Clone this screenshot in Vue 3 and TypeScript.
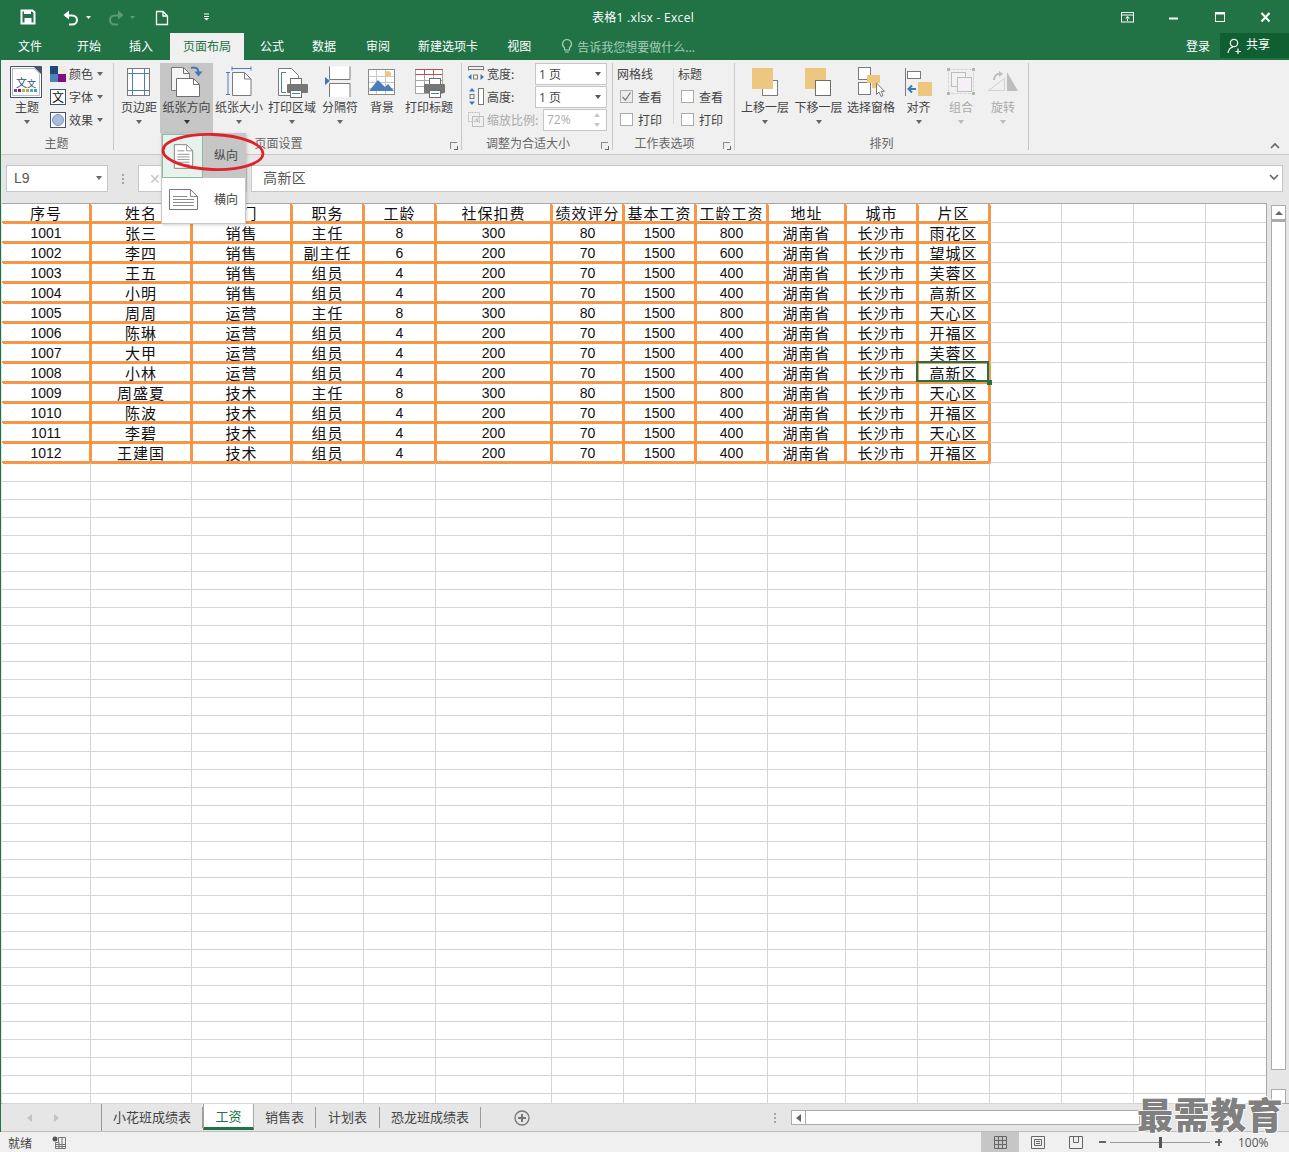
<script setup lang="ts">
const headers = '序号 姓名 部门 职务 工龄 社保扣费 绩效评分 基本工资 工龄工资 地址 城市 片区'.split(' ')

const records = [
  '1001 张三 销售 主任 8 300 80 1500 800 湖南省 长沙市 雨花区',
  '1002 李四 销售 副主任 6 200 70 1500 600 湖南省 长沙市 望城区',
  '1003 王五 销售 组员 4 200 70 1500 400 湖南省 长沙市 芙蓉区',
  '1004 小明 销售 组员 4 200 70 1500 400 湖南省 长沙市 高新区',
  '1005 周周 运营 主任 8 300 80 1500 800 湖南省 长沙市 天心区',
  '1006 陈琳 运营 组员 4 200 70 1500 400 湖南省 长沙市 开福区',
  '1007 大甲 运营 组员 4 200 70 1500 400 湖南省 长沙市 芙蓉区',
  '1008 小林 运营 组员 4 200 70 1500 400 湖南省 长沙市 高新区',
  '1009 周盛夏 技术 主任 8 300 80 1500 800 湖南省 长沙市 天心区',
  '1010 陈波 技术 组员 4 200 70 1500 400 湖南省 长沙市 开福区',
  '1011 李碧 技术 组员 4 200 70 1500 400 湖南省 长沙市 天心区',
  '1012 王建国 技术 组员 4 200 70 1500 400 湖南省 长沙市 开福区'
].map((r) => r.split(' '))

const COLS = 16

type Cell = { key: string; text: string; data: boolean; num: boolean; sel: boolean }

const cells: Cell[] = []
const table = [headers, ...records]
for (let r = 0; r < 49; r++) {
  for (let c = 0; c < COLS; c++) {
    const text = table[r]?.[c] ?? ''
    cells.push({
      key: `${r}-${c}`,
      text,
      data: text !== '',
      num: /^\d+$/.test(text),
      sel: r === 8 && c === 11
    })
  }
}

const sheets = ['小花班成绩表', '工资', '销售表', '计划表', '恐龙班成绩表']
</script>

<template>
  <div class="app">
    <!-- title bar -->
    <div class="titlebar">
      <div class="qat">
        <svg width="220" height="33" viewBox="0 0 220 33">
          <path d="M21.5 9.5h11l2 2v11h-13z" fill="none" stroke="#fff" stroke-width="2" />
          <rect x="24" y="9" width="7" height="4" fill="#fff" />
          <rect x="24.5" y="17" width="7" height="5" fill="#fff" />
          <path d="M65 14.5h7c3 0 5 2 5 4.500s-2 4.500-5 4.500h-3" fill="none" stroke="#fff" stroke-width="2" />
          <path d="M69 9.500v9l-5.500-4.500z" fill="#fff" />
          <path d="M86 15h5l-2.500 3z" fill="#fff" />
          <path d="M122 14.500h-7c-3 0-5 2-5 4.500s2 4.500 5 4.500h3" fill="none" stroke="#5c9a7a" stroke-width="2" />
          <path d="M118 9.500v9l5.500-4.500z" fill="#5c9a7a" />
          <path d="M130 15h5l-2.500 3z" fill="#5c9a7a" />
          <path d="M156.500 10.500h6.500l4.500 4.500v8.500h-11zM163 10.500v4.500h4.500" fill="none" stroke="#fff" stroke-width="1.300" />
          <path d="M204 13h5M204 15.500h5v0" stroke="#fff" />
          <path d="M204 17h5l-2.500 2.500z" fill="#fff" />
        </svg>
      </div>
      <div class="doc-title">表格1 .xlsx - Excel</div>
      <div class="win-btns">
        <svg width="180" height="33" viewBox="1109 0 180 33">
          <rect x="1121.500" y="11.500" width="12" height="9.500" fill="none" stroke="#fff" />
          <path d="M1121 14h13" stroke="#fff" />
          <path d="M1127.500 15l-2.500 2.500h5zM1127 17h1v3h-1z" fill="#fff" />
          <path d="M1169 17.500h9" stroke="#fff" stroke-width="2" />
          <rect x="1215.500" y="11.500" width="9" height="9" fill="none" stroke="#fff" />
          <path d="M1215 12.500h10" stroke="#fff" stroke-width="2" />
          <path d="M1261.500 12l8 8.500M1269.500 12l-8 8.500" stroke="#fff" stroke-width="2" />
        </svg>
      </div>
    </div>

    <!-- tabs -->
    <div class="tabs">
      <span class="tab first">文件</span>
      <span class="tab">开始</span>
      <span class="tab">插入</span>
      <span class="tab active">页面布局</span>
      <span class="tab">公式</span>
      <span class="tab">数据</span>
      <span class="tab wide">审阅</span>
      <span class="tab">新建选项卡</span>
      <span class="tab view-tab">视图</span>
      <span class="tell">
        <svg width="14" height="16" viewBox="0 0 14 16">
          <path d="M7 1.500a4.500 4.500 0 0 0-2.500 8.200V12h5V9.700A4.500 4.500 0 0 0 7 1.500zM5 14h4" fill="none" stroke="#a6cdb7" stroke-width="1.200" />
        </svg>
        告诉我您想要做什么...
      </span>
      <span class="login">登录</span>
      <span class="share">
        <svg width="16" height="18" viewBox="0 0 16 18">
          <circle cx="7" cy="6" r="3.700" fill="none" stroke="#fff" stroke-width="1.200" />
          <path d="M1 16c.5-3.500 2.500-5.500 5-6M11 11.500v5.500M8.500 14.500h5.500" fill="none" stroke="#fff" stroke-width="1.200" />
        </svg>
        <span class="share-text">共享</span>
      </span>
    </div>

    <!-- ribbon -->
    <div class="ribbon">
      <div class="group g-theme">
        <div class="group-body theme-body">
          <div class="rbtn w34">
            <svg width="34" height="33" viewBox="10 66 34 33">
              <path d="M10.500 66.500h31v31h-31z" fill="#fff" stroke="#44546a" />
              <path d="M12.500 68.500h22l5 5v22h-27z" fill="#fff" stroke="#b4bcc8" />
              <path d="M34 67h7v7z" fill="#44546a" />
              <text x="16" y="87" font-size="11" fill="#1f4e79">文</text>
              <text x="27" y="87" font-size="9" fill="#1f4e79">文</text>
              <rect x="14" y="89" width="3" height="3" fill="#7f3f98" />
              <rect x="18" y="89" width="3" height="3" fill="#8e1b8e" />
              <rect x="22" y="89" width="3" height="3" fill="#9bbb59" />
              <rect x="26" y="89" width="3" height="3" fill="#c8a13c" />
              <rect x="30" y="89" width="3" height="3" fill="#4bacc6" />
              <rect x="34" y="89" width="3" height="3" fill="#5b8fc9" />
            </svg>
            <span class="rlabel">主题</span>
            <i class="caret" />
          </div>
          <div class="theme-list">
            <div class="theme-row">
              <svg width="16" height="16" viewBox="0 0 16 16">
                <rect width="8" height="8" fill="#1f497d" />
                <rect x="8" width="8" height="8" fill="#eeece1" />
                <rect y="8" width="8" height="8" fill="#4f81bd" />
                <rect x="8" y="8" width="8" height="8" fill="#7f0f7f" />
              </svg>
              <span>颜色</span><i class="caret" />
            </div>
            <div class="theme-row">
              <svg width="16" height="16" viewBox="0 0 16 16">
                <rect x=".5" y=".5" width="15" height="15" fill="#fff" stroke="#44546a" />
                <text x="2" y="13" font-size="12" fill="#111">文</text>
              </svg>
              <span>字体</span><i class="caret" />
            </div>
            <div class="theme-row">
              <svg width="16" height="16" viewBox="0 0 16 16">
                <rect x=".5" y=".5" width="15" height="15" fill="#fff" stroke="#44546a" />
                <circle cx="8" cy="8" r="5.500" fill="#a9bcdc" stroke="#7a93bd" />
              </svg>
              <span>效果</span><i class="caret" />
            </div>
          </div>
        </div>
        <div class="group-label">主题</div>
      </div>

      <div class="group g-page">
        <div class="group-body">
          <div class="rbtn w42">
            <svg width="42" height="33" viewBox="118 66 42 33">
              <rect x="127.500" y="68.500" width="22" height="27" fill="#fff" stroke="#7a7a7a" />
              <path d="M132.500 69v26M144.500 69v26M128 73.500h21M128 90.500h21" stroke="#4a7ebb" />
            </svg>
            <span class="rlabel">页边距</span>
            <i class="caret" />
          </div>
          <div class="rbtn w53 hot">
            <svg width="53" height="33" viewBox="160 66 53 33">
              <path d="M171.500 67.500h12l6 6v17h-18z" fill="#f4f4f4" stroke="#7a7a7a" />
              <path d="M176.500 78.500h17l6 6v12h-23z" fill="#fff" stroke="#6e6e6e" />
              <path d="M193.500 79v5.500h6M183.500 68v5.500h6" fill="none" stroke="#6e6e6e" />
              <path d="M191 68c4-1.500 7 0 7.500 4" fill="none" stroke="#3f78b5" stroke-width="2" />
              <path d="M194.500 71.500h8l-4 5z" fill="#3f78b5" />
            </svg>
            <span class="rlabel">纸张方向</span>
            <i class="caret" />
          </div>
          <div class="rbtn w52">
            <svg width="52" height="33" viewBox="213 66 52 33">
              <path d="M232.500 72.500h12l6.500 6.500v16.500h-18.500z" fill="#fff" stroke="#7a7a7a" />
              <path d="M244.500 73v6h6.500" fill="none" stroke="#7a7a7a" />
              <path d="M232 66.500v4M251 66.500v4M232 68.500h19M226 72.500h4M226 94.500h4M228 72.500v22" stroke="#4a7ebb" fill="none" />
            </svg>
            <span class="rlabel">纸张大小</span>
            <i class="caret" />
          </div>
          <div class="rbtn w52 ml1">
            <svg width="52" height="33" viewBox="266 66 52 33">
              <path d="M278.500 68.500h13l7 7v20h-20z" fill="#fff" stroke="#7a7a7a" />
              <path d="M286 72.500h-4.500v20h4.500" fill="none" stroke="#4a7ebb" />
              <rect x="290.500" y="78.500" width="11" height="7" fill="#fff" stroke="#6e6e6e" />
              <rect x="287" y="84" width="21" height="9" rx="1" fill="#767676" />
              <rect x="290.500" y="90.500" width="11" height="7" fill="#fff" stroke="#6e6e6e" />
              <path d="M292 93.500h8" stroke="#4a7ebb" />
            </svg>
            <span class="rlabel">打印区域</span>
            <i class="caret" />
          </div>
          <div class="rbtn w44">
            <svg width="44" height="33" viewBox="318 66 44 33">
              <path d="M329.500 66.500v13h20.500v-13M329.500 97v-13.500h20.500v13.500" fill="#fff" stroke="#7a7a7a" />
              <path d="M325 77l5 4-5 4z" fill="#3f78b5" />
            </svg>
            <span class="rlabel">分隔符</span>
            <i class="caret" />
          </div>
          <div class="rbtn w40">
            <svg width="40" height="33" viewBox="362 66 40 33">
              <rect x="368.500" y="69.500" width="26" height="25" fill="#fff" stroke="#8a8a8a" />
              <path d="M369 76.500h25M369 82.500h25M369 88.500h25M376.500 70v24M385.500 70v24" stroke="#c8c8c8" />
              <path d="M369 91l9-11 7 7 3-3 6 7z" fill="#4a7ebb" />
              <circle cx="388" cy="74" r="3" fill="#edc77f" />
            </svg>
            <span class="rlabel">背景</span>
          </div>
          <div class="rbtn w54">
            <svg width="54" height="33" viewBox="402 66 54 33">
              <rect x="415.500" y="69.500" width="27" height="24" fill="#fff" stroke="#a6a6a6" />
              <path d="M416 74.500h26M416 80.500h26M416 86.500h26M424.500 74v20M433.500 74v20" stroke="#a6a6a6" />
              <path d="M415 69.500h28M424.500 70v4M433.500 70v4M415.500 74.500h27" stroke="#c0504d" fill="none" />
              <rect x="429.500" y="78.500" width="11" height="7" fill="#fff" stroke="#6e6e6e" />
              <rect x="424" y="84" width="21" height="9" rx="1" fill="#767676" />
              <rect x="429.500" y="90.500" width="11" height="7" fill="#fff" stroke="#6e6e6e" />
              <path d="M431 93.500h8" stroke="#4a7ebb" />
            </svg>
            <span class="rlabel">打印标题</span>
          </div>
        </div>
        <div class="group-label has-launcher">页面设置</div>
        <i class="launcher" />
      </div>

      <div class="group g-fit">
        <div class="group-body fit-body">
          <div class="fit-row">
            <svg width="19" height="18" viewBox="0 0 19 18">
              <path d="M.5 1.500h15v4M.500 1.500v4" fill="none" stroke="#7a7a7a" />
              <path d="M.5 4.500h15" stroke="#7a7a7a" />
              <path d="M0 12l3.500-3v6zM16 12l-3.500-3v6z" fill="#3f78b5" />
              <rect x="5.500" y="10" width="4" height="4" fill="none" stroke="#7a7a7a" />
            </svg>
            <span class="fit-name">宽度:</span>
            <span class="combo">1 页<i class="caret" /></span>
          </div>
          <div class="fit-row">
            <svg width="19" height="18" viewBox="0 0 19 18">
              <rect x="10.500" y=".5" width="5" height="16" fill="#fff" stroke="#7a7a7a" />
              <path d="M4 0l3 3.500H1zM4 17l3-3.500H1z" fill="#3f78b5" />
              <rect x="2" y="6.500" width="4" height="4" fill="none" stroke="#7a7a7a" />
            </svg>
            <span class="fit-name">高度:</span>
            <span class="combo">1 页<i class="caret" /></span>
          </div>
          <div class="fit-row off">
            <svg width="19" height="18" viewBox="0 0 19 18">
              <rect x=".5" y="1.500" width="11" height="9" fill="none" stroke="#bdbdbd" stroke-dasharray="2 1" />
              <rect x="4.500" y="5.500" width="11" height="10" fill="none" stroke="#bdbdbd" />
              <path d="M8 8l4 4M8 8h3M8 8v3" stroke="#bdbdbd" />
            </svg>
            <span class="fit-name wide">缩放比例:</span>
            <span class="combo short">72%<i class="spin" /></span>
          </div>
        </div>
        <div class="group-label has-launcher">调整为合适大小</div>
        <i class="launcher" />
      </div>

      <div class="group g-opts">
        <div class="group-body opts-body">
          <div class="opt-col">
            <div class="opt-head">网格线</div>
            <label class="opt"><i class="cb checked">
              <svg width="11" height="11" viewBox="0 0 11 11"><path d="M1.500 6l3 3 5-7.500" fill="none" stroke="#7a7a7a" stroke-width="1.300" /></svg>
            </i>查看</label>
            <label class="opt"><i class="cb" />打印</label>
          </div>
          <div class="opt-col">
            <div class="opt-head">标题</div>
            <label class="opt"><i class="cb" />查看</label>
            <label class="opt"><i class="cb" />打印</label>
          </div>
        </div>
        <div class="group-label has-launcher">工作表选项</div>
        <i class="launcher" />
      </div>

      <div class="group g-arrange">
        <div class="group-body arrange-body">
          <div class="rbtn w54">
            <svg width="54" height="33" viewBox="738 66 54 33">
              <rect x="762.500" y="80.500" width="15" height="15" fill="#fff" stroke="#7a7a7a" />
              <rect x="752" y="68" width="21" height="21" fill="#edc77f" />
            </svg>
            <span class="rlabel">上移一层</span>
            <i class="caret" />
          </div>
          <div class="rbtn w53">
            <svg width="53" height="33" viewBox="792 66 53 33">
              <rect x="805" y="68" width="21" height="21" fill="#edc77f" />
              <rect x="815.500" y="80.500" width="15" height="15" fill="#fff" stroke="#6e6e6e" />
            </svg>
            <span class="rlabel">下移一层</span>
            <i class="caret" />
          </div>
          <div class="rbtn w52">
            <svg width="52" height="33" viewBox="845 66 52 33">
              <rect x="858.500" y="67.500" width="12" height="12" fill="#fff" stroke="#7a7a7a" />
              <rect x="858.500" y="82.500" width="12" height="12" fill="#fff" stroke="#7a7a7a" />
              <rect x="867" y="75" width="13" height="8" fill="#edc77f" />
              <rect x="872" y="83" width="4" height="5" fill="#edc77f" />
              <path d="M876.500 83v11.500l2.500-2.500 2 4.500 2-1-2-4.200h3.500z" fill="#fff" stroke="#7a7a7a" />
            </svg>
            <span class="rlabel">选择窗格</span>
          </div>
          <div class="rbtn w43">
            <svg width="43" height="33" viewBox="897 66 43 33">
              <path d="M905.500 68v28" stroke="#7a7a7a" />
              <rect x="907.500" y="71.500" width="13" height="7" fill="#fff" stroke="#7a7a7a" />
              <rect x="918" y="82" width="14" height="14" fill="#edc77f" />
              <path d="M912 85.500l-3.500 3.500 3.500 3.500M909 89h7" fill="none" stroke="#3f78b5" stroke-width="2" />
            </svg>
            <span class="rlabel">对齐</span>
            <i class="caret" />
          </div>
          <div class="rbtn w42 off">
            <svg width="42" height="33" viewBox="940 66 42 33">
              <rect x="948.500" y="69.500" width="25" height="24" fill="none" stroke="#d4d4d4" stroke-dasharray="3 1" />
              <rect x="951.500" y="72.500" width="14" height="14" fill="#f4f0f6" stroke="#bdbdbd" />
              <rect x="957.500" y="77.500" width="14" height="14" fill="#f4f0f6" stroke="#bdbdbd" />
              <path d="M947 68h3v3h-3zM972 68h3v3h-3zM947 92h3v3h-3zM972 92h3v3h-3z" fill="#b4b4b4" />
            </svg>
            <span class="rlabel">组合</span>
            <i class="caret" />
          </div>
          <div class="rbtn w42 off">
            <svg width="42" height="33" viewBox="982 66 42 33">
              <path d="M988.500 90.500l16-12v12z" fill="none" stroke="#d0d0d0" />
              <path d="M1007 72l11 19h-11z" fill="#bdbdbd" />
              <path d="M994 80c0-4 3-7 7-6" fill="none" stroke="#bdbdbd" stroke-width="2" />
              <path d="M999 71l4 3-4 3z" fill="#bdbdbd" />
            </svg>
            <span class="rlabel">旋转</span>
            <i class="caret" />
          </div>
        </div>
        <div class="group-label">排列</div>
      </div>

      <svg class="collapse" width="12" height="8" viewBox="0 0 12 8">
        <path d="M2 6l4-4 4 4" fill="none" stroke="#666" stroke-width="1.600" />
      </svg>
    </div>

    <!-- formula bar -->
    <div class="formula">
      <div class="namebox">L9<i class="caret dark" /></div>
      <div class="fdots"><i /><i /><i /></div>
      <div class="fbtns">✕</div>
      <div class="finput">高新区
        <svg width="10" height="7" viewBox="0 0 10 7"><path d="M1 1l4 4 4-4" fill="none" stroke="#666" stroke-width="1.600" /></svg>
      </div>
    </div>

    <!-- sheet -->
    <div class="sheet-area">
      <div class="sheet">
        <div
          v-for="cell in cells"
          :key="cell.key"
          class="cell"
          :class="{ data: cell.data, num: cell.num, sel: cell.sel }"
        >{{ cell.text }}</div>
      </div>
      <div class="vscroll">
        <div class="sb-btn"><i class="tri-up" /></div>
        <div class="sb-thumb" />
        <div class="sb-track" />
        <div class="sb-btn" />
      </div>
    </div>

    <!-- sheet tabs -->
    <div class="tabstrip">
      <div class="nav">
        <i class="tri-left" />
        <i class="tri-right" />
      </div>
      <div class="sheets">
        <span v-for="s in sheets" :key="s" class="sheet-tab" :class="{ cur: s === '工资' }">{{ s }}</span>
      </div>
      <svg class="add" width="16" height="16" viewBox="0 0 16 16">
        <circle cx="8" cy="8" r="7" fill="none" stroke="#777" stroke-width="1.300" />
        <path d="M8 4v8M4 8h8" stroke="#777" stroke-width="2" />
      </svg>
      <div class="hdots"><i /><i /><i /></div>
      <div class="hscroll">
        <div class="hs-btn"><i class="tri-left dark" /></div>
        <div class="hs-thumb" />
      </div>
    </div>

    <!-- status bar -->
    <div class="status">
      <span class="ready">就绪</span>
      <svg width="14" height="13" viewBox="0 0 14 13">
        <circle cx="3" cy="3" r="2.500" fill="#555" />
        <path d="M6.500 1.500h7v11h-10v-6h3zM3.500 8.500h10M3.500 10.500h10M7 6v6M10 2v10" fill="none" stroke="#777" />
      </svg>
      <div class="views">
        <div class="view cur">
          <svg width="13" height="13" viewBox="0 0 13 13"><path d="M.5.500h12v12H.5zM.5 4.500h12M.5 8.500h12M4.500.500v12M8.500.500v12" fill="none" stroke="#666" /></svg>
        </div>
        <div class="view">
          <svg width="14" height="13" viewBox="0 0 14 13"><path d="M.5.500h13v12H.5zM3.500 3.500h7v6h-7zM5 5.500h4M5 7.500h4" fill="none" stroke="#666" /></svg>
        </div>
        <div class="view">
          <svg width="14" height="13" viewBox="0 0 14 13"><path d="M.5.500h13v12H.5zM4.500.500v6h5v-6" fill="none" stroke="#666" /></svg>
        </div>
      </div>
      <div class="zoom">
        <i class="minus" />
        <div class="ztrack"><i class="zthumb" /></div>
        <i class="plus" />
      </div>
      <span class="pct">100%</span>
    </div>

    <!-- orientation dropdown -->
    <div class="menu">
      <div class="menu-item on">
        <div class="menu-icon">
          <svg width="21" height="27" viewBox="0 0 24 30">
            <path d="M1.500 1.500h14l7 7v20h-21z" fill="#fff" stroke="#777" />
            <path d="M15.500 2v6.500h7M5 8.500h8M5 12.500h14M5 15.500h14M5 18.500h14M5 21.500h14M5 24.500h14" fill="none" stroke="#8a8a8a" />
          </svg>
        </div>
        <span>纵向</span>
      </div>
      <div class="menu-item">
        <div class="menu-icon">
          <svg width="29" height="22" viewBox="0 0 29 22">
            <path d="M.5.500h21l7 7v13H.5z" fill="#fff" stroke="#777" />
            <path d="M21.500 1v6.500h7M4 7.500h14M4 10.500h21M4 13.500h21M4 16.500h21" fill="none" stroke="#8a8a8a" />
          </svg>
        </div>
        <span>横向</span>
      </div>
    </div>
    <svg class="ring" width="106" height="42" viewBox="0 0 106 42">
      <ellipse cx="53" cy="21" rx="50" ry="17.500" fill="none" stroke="#e0212b" stroke-width="2.800" transform="rotate(2 53 21)" />
    </svg>

    <div class="watermark">最需教育</div>
  </div>
</template>

<style scoped>
.app {
  position: relative;
  width: 1289px;
  height: 1152px;
  overflow: hidden;
  display: flex;
  flex-direction: column;
  background: #f0f0f0;
  color: #444;
  font-family: "Noto Sans CJK SC", "Liberation Sans", sans-serif;
  font-size: 12px;
}
.app::after {
  content: "";
  position: absolute;
  left: 0;
  top: 60px;
  bottom: 20px;
  width: 1px;
  background: #217346;
}
i {
  font-style: normal;
}

/* title bar */
.titlebar {
  height: 33px;
  background: #217346;
  display: grid;
  grid-template-columns: 1fr auto 1fr;
  align-items: center;
  color: #fff;
  flex: none;
}
.qat {
  height: 33px;
}
.qat svg,
.win-btns svg {
  display: block;
}
.doc-title {
  font-family: "Open Sans", "Noto Sans CJK SC", sans-serif;
  font-size: 12px;
  line-height: 33px;
  padding-top: 1px;
  margin-left: -3px;
  letter-spacing: .3px;
}
.win-btns {
  justify-self: end;
}

.tabs {
  height: 27px;
  flex: none;
  background: #217346;
  display: flex;
  align-items: stretch;
  color: #fff;
  line-height: 25px;
}
.tab {
  padding: 0 14px;
  white-space: nowrap;
}
.tab.first {
  padding: 0 21px 0 18px;
}
.tab.wide {
  padding-left: 16px;
}
.tab.view-tab {
  padding-left: 15px;
}
.tab.active {
  background: #f0f0f0;
  color: #217346;
  padding: 0 13px;
  margin: 0 2px 0 3px;
}
.tell {
  margin-left: 15px;
  color: #a6cdb7;
  display: flex;
  align-items: center;
  gap: 3px;
  padding-bottom: 1px;
}
.login {
  margin-left: auto;
  margin-right: 10px;
}
.share {
  width: 69px;
  height: 25px;
  background: #0f5f32;
  display: flex;
  align-items: center;
  gap: 3px;
  padding-left: 7px;
  box-sizing: border-box;
}
.share-text {
  line-height: 22px;
  align-self: flex-start;
}

/* ribbon */
.ribbon {
  height: 95px;
  flex: none;
  box-sizing: border-box;
  padding-top: 3px;
  border-bottom: 1px solid #c8c8c8;
  display: flex;
  align-items: flex-start;
  position: relative;
}
.group {
  position: relative;
  height: 87px;
  box-sizing: border-box;
  border-right: 1px solid #c8c8c8;
  display: flex;
  flex-direction: column;
}
.g-theme { width: 114px; }
.g-page { width: 348px; }
.g-fit { width: 151px; }
.g-opts { width: 122px; }
.g-arrange { width: 294px; }
.group-body {
  height: 70px;
  display: flex;
  flex: none;
}
.group-label {
  text-align: center;
  line-height: 19px;
  color: #666;
}
.has-launcher {
  padding-right: 18px;
}
.launcher {
  position: absolute;
  right: 4px;
  bottom: 1px;
  width: 7px;
  height: 7px;
  border-left: 1px solid #8a8a8a;
  border-top: 1px solid #8a8a8a;
  box-sizing: border-box;
}
.launcher::after {
  content: "";
  position: absolute;
  right: -1px;
  bottom: -1px;
  width: 4px;
  height: 4px;
  border-right: 1px solid #666;
  border-bottom: 1px solid #666;
  box-sizing: border-box;
}
.rbtn {
  display: flex;
  flex-direction: column;
  align-items: center;
  height: 70px;
  flex: none;
  padding-top: 3px;
  box-sizing: border-box;
}
.rbtn svg {
  display: block;
  flex: none;
}
.rlabel {
  line-height: 16px;
  white-space: nowrap;
}
.caret {
  display: block;
  width: 0;
  height: 0;
  border-top: 4px solid #666;
  border-left: 3.500px solid transparent;
  border-right: 3.500px solid transparent;
  margin-top: 5px;
}
.w34 { width: 34px; }
.w40 { width: 40px; }
.w42 { width: 42px; }
.w43 { width: 43px; }
.w44 { width: 44px; }
.w52 { width: 52px; }
.w53 { width: 53px; }
.w54 { width: 54px; }
.ml1 { margin-left: 1px; }
.hot {
  background: #c6c6c6;
}
.hot .caret {
  border-top-color: #333;
}
.off,
.off .rlabel {
  color: #aaa;
}
.off .caret {
  border-top-color: #bbb;
}
.g-page .group-body {
  padding-left: 4px;
}
.theme-body {
  padding-left: 10px;
}
.theme-list {
  margin: -1px 0 0 6px;
}
.theme-row {
  height: 23px;
  display: flex;
  align-items: center;
  gap: 3px;
}
.theme-row .caret {
  margin: 0 0 0 1px;
}
.fit-body {
  flex-direction: column;
  padding-left: 6px;
  margin: -1px 0 1px;
}
.fit-row {
  height: 23px;
  display: flex;
  align-items: center;
}
.fit-row svg {
  flex: none;
}
.fit-name {
  width: 48px;
}
.fit-name.wide {
  width: 56px;
  white-space: nowrap;
}
.combo {
  width: 72px;
  height: 22px;
  box-sizing: border-box;
  background: #fff;
  border: 1px solid #c6c6c6;
  display: flex;
  align-items: center;
  justify-content: space-between;
  padding: 0 5px 0 3px;
  font-family: "Open Sans", "Noto Sans CJK SC", sans-serif;
}
.combo .caret {
  margin: 0;
  border-top-color: #555;
}
.combo.short {
  width: 64px;
  color: #aaa;
}
.spin {
  width: 7px;
  height: 14px;
  position: relative;
}
.spin::before,
.spin::after {
  content: "";
  position: absolute;
  left: 0;
  border-left: 3.500px solid transparent;
  border-right: 3.500px solid transparent;
}
.spin::before {
  top: 0;
  border-bottom: 4px solid #c6c6c6;
}
.spin::after {
  bottom: 0;
  border-top: 4px solid #c6c6c6;
}
.off .fit-name {
  color: #aaa;
}
.opts-body {
  padding-left: 4px;
  margin: -1px 0 1px;
}
.opt-col {
  width: 56px;
}
.opt-col + .opt-col {
  width: 56px;
  padding-left: 4px;
  margin-top: 7px;
  height: 55px;
  border-left: 1px solid #d8d8d8;
}
.opt-col + .opt-col .opt-head {
  margin-top: -7px;
}
.opt-head {
  height: 23px;
  line-height: 23px;
}
.opt {
  height: 23px;
  display: flex;
  align-items: center;
  padding-left: 3px;
  gap: 5px;
}
.cb {
  width: 13px;
  height: 13px;
  box-sizing: border-box;
  border: 1px solid #ababab;
  background: #fff;
  display: block;
}
.cb.checked {
  background: #ececec;
}
.cb svg {
  display: block;
}
.arrange-body {
  padding-left: 3px;
}
.collapse {
  position: absolute;
  left: 1269px;
  top: 82px;
}

/* formula bar */
.formula {
  height: 48px;
  flex: none;
  background: #e6e6e6;
  box-sizing: border-box;
  padding: 10px 6px 11px 6px;
  display: flex;
  align-items: stretch;
}
.namebox {
  width: 102px;
  box-sizing: border-box;
  background: #fff;
  border: 1px solid #c6c6c6;
  display: flex;
  align-items: center;
  justify-content: space-between;
  padding: 0 5px 1px 7px;
  font-family: "Liberation Sans", sans-serif;
  font-size: 14px;
  color: #555;
}
.namebox .caret {
  margin: 0;
}
.fdots {
  width: 30px;
  display: flex;
  flex-direction: column;
  align-items: center;
  justify-content: center;
  gap: 2px;
}
.fdots i,
.hdots i {
  width: 2px;
  height: 2px;
  display: block;
  background: #a6a6a6;
}
.fbtns {
  width: 109px;
  box-sizing: border-box;
  background: #fff;
  border: 1px solid #c6c6c6;
  color: #c6c6c6;
  padding-left: 10px;
  line-height: 25px;
  font-size: 14px;
}
.finput {
  flex: 1;
  margin-left: 4px;
  box-sizing: border-box;
  background: #fff;
  border: 1px solid #c6c6c6;
  display: flex;
  align-items: center;
  justify-content: space-between;
  padding: 0 3px 3px 11px;
  font-size: 14px;
  letter-spacing: .4px;
  color: #555;
}

/* sheet */
.sheet-area {
  height: 901px;
  flex: none;
  background: #e6e6e6;
  display: flex;
  padding-left: 2px;
  box-sizing: border-box;
}
.sheet {
  width: 1265px;
  height: 901px;
  box-sizing: border-box;
  flex: none;
  background: #fff;
  border-top: 1px solid #a6a6a6;
  border-right: 1px solid #a6a6a6;
  display: grid;
  grid-template-columns: 89px 101px 100px 72px 72px 116px 72px 72px 72px 78px 72px 72px 72px 72px 72px 1fr;
  grid-template-rows: 19px repeat(12, 20px) 19px repeat(34, 18px) 10px;
  overflow: hidden;
}
.cell {
  position: relative;
  box-sizing: border-box;
  border-right: 1px solid #d4d4d4;
  border-bottom: 1px solid #d4d4d4;
  display: flex;
  align-items: center;
  justify-content: center;
  color: #111;
  font-size: 15px;
  letter-spacing: 1px;
  line-height: 18px;
  white-space: nowrap;
}
.cell:nth-child(16n) {
  border-right: 0;
}
.cell.data {
  border-color: #f79646;
  border-width: 0 2px 2px 0;
  box-shadow: 1px 1px 0 #f79646;
  padding: 1px 0 0 1px;
}
.cell.num {
  font-family: "Liberation Sans", sans-serif;
  font-size: 14px;
  letter-spacing: 0;
  padding: 2px 0 0 1px;
}
.cell.sel::before {
  content: "";
  position: absolute;
  left: -2px;
  top: -2px;
  right: -1px;
  bottom: -1px;
  border: 2px solid #217346;
}
.cell.sel::after {
  content: "";
  position: absolute;
  right: -4px;
  bottom: -4px;
  width: 5px;
  height: 5px;
  background: #217346;
  z-index: 1;
}
.vscroll {
  width: 15px;
  margin: 2px 0 0 4px;
  display: flex;
  flex-direction: column;
  flex: none;
}
.sb-btn {
  height: 15px;
  flex: none;
  box-sizing: border-box;
  background: #fff;
  border: 1px solid #ababab;
  display: flex;
  align-items: center;
  justify-content: center;
}
.tri-up {
  width: 0;
  height: 0;
  border-bottom: 4px solid #666;
  border-left: 4px solid transparent;
  border-right: 4px solid transparent;
}
.sb-thumb {
  height: 850px;
  flex: none;
  box-sizing: border-box;
  background: #fff;
  border: 1px solid #ababab;
  border-top-width: 2px;
}
.sb-track {
  flex: 1;
  background: #e6e6e6;
}

/* sheet tabs */
.tabstrip {
  flex: none;
  background: #e6e6e6;
  border-top: 1px solid #a6a6a6;
  border-bottom: 1px solid #bdbdbd;
  box-sizing: border-box;
  display: flex;
  align-items: center;
  margin-top: -1px;
  height: 29px;
}
.nav {
  width: 101px;
  padding-left: 27px;
  box-sizing: border-box;
  display: flex;
  gap: 22px;
}
.tri-left {
  width: 0;
  height: 0;
  display: block;
  border-right: 5px solid #c2c2c2;
  border-top: 4px solid transparent;
  border-bottom: 4px solid transparent;
}
.tri-left.dark {
  border-right-color: #666;
}
.tri-right {
  width: 0;
  height: 0;
  display: block;
  border-left: 5px solid #c2c2c2;
  border-top: 4px solid transparent;
  border-bottom: 4px solid transparent;
}
.sheets {
  display: flex;
  height: 100%;
  border-left: 1px solid #9a9a9a;
  box-sizing: border-box;
}
.sheet-tab {
  padding: 0 11px;
  font-size: 13px;
  color: #444;
  border-right: 1px solid #9a9a9a;
  margin: 3px 0;
  line-height: 20px;
  white-space: nowrap;
}
.sheet-tab:nth-child(4) {
  padding: 0 12px;
}
.sheet-tab.cur {
  background: #fff;
  color: #217346;
  margin: -1px 0 0;
  height: 27px;
  line-height: 25px;
  padding: 0;
  box-sizing: border-box;
  width: 51px;
  text-align: center;
  border: 1px solid #a6a6a6;
  border-top: 0;
  border-bottom: 3px solid #217346;
}
.add {
  margin-left: 33px;
  flex: none;
}
.hdots {
  margin-left: 244px;
  display: flex;
  flex-direction: column;
  gap: 2px;
}
.hscroll {
  margin-left: 15px;
  display: flex;
  height: 15px;
  flex: none;
}
.hs-btn {
  width: 15px;
  box-sizing: border-box;
  background: #fff;
  border: 1px solid #ababab;
  display: flex;
  align-items: center;
  justify-content: center;
}
.hs-thumb {
  width: 334px;
  box-sizing: border-box;
  background: #fff;
  border: 1px solid #ababab;
  border-left-width: 0;
}

/* status bar */
.status {
  height: 20px;
  flex: none;
  display: flex;
  align-items: center;
  background: #f0f0f0;
  padding-left: 8px;
}
.ready {
  margin-right: 20px;
}
.views {
  margin-left: auto;
  display: flex;
  height: 20px;
}
.view {
  width: 38px;
  display: flex;
  align-items: center;
  justify-content: center;
}
.view.cur {
  background: #c6c6c6;
}
.view svg {
  display: block;
}
.zoom {
  display: flex;
  align-items: center;
  margin-left: 4px;
}
.minus,
.plus {
  display: block;
  position: relative;
  width: 7px;
  height: 2px;
  background: #666;
}
.plus::after {
  content: "";
  position: absolute;
  left: 2.500px;
  top: -2.500px;
  width: 2px;
  height: 7px;
  background: #666;
}
.ztrack {
  width: 100px;
  height: 1px;
  background: #9a9a9a;
  position: relative;
  margin: 0 5px 0 4px;
}
.zthumb {
  position: absolute;
  left: 49px;
  top: -5px;
  width: 3px;
  height: 11px;
  background: #555;
}
.pct {
  width: 67px;
  padding-left: 16px;
  box-sizing: border-box;
  font-family: "Open Sans", sans-serif;
  color: #555;
  flex: none;
}

/* dropdown */
.menu {
  position: absolute;
  left: 161px;
  top: 133px;
  width: 85px;
  height: 91px;
  box-sizing: border-box;
  background: #fff;
  border: 1px solid #c6c6c6;
  box-shadow: 1px 1px 3px rgba(0, 0, 0, .18);
}
.menu-item {
  height: 44px;
  display: flex;
  align-items: center;
}
.menu-item span {
  margin-left: 11px;
  padding-bottom: 3px;
}
.menu-item.on {
  background: #c6c6c6;
}
.menu-icon {
  width: 41px;
  height: 44px;
  box-sizing: border-box;
  display: flex;
  align-items: center;
  justify-content: center;
  flex: none;
  padding-left: 2px;
}
.on .menu-icon {
  background: #e8f2ec;
  border: 1px solid #86bfa0;
}
.menu-icon svg {
  display: block;
}
.ring {
  position: absolute;
  left: 160px;
  top: 131px;
}
.watermark {
  position: absolute;
  left: 1137px;
  top: 1094px;
  font-size: 36px;
  font-weight: 900;
  line-height: 38px;
  letter-spacing: .6px;
  white-space: nowrap;
  color: #808080;
  text-shadow: 1px 0 #fff, -1px 0 #fff, 0 1px #fff, 0 -1px #fff;
}
</style>
